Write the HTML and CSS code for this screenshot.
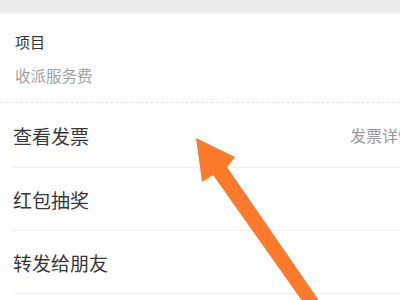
FILE: index.html
```html
<!DOCTYPE html>
<html lang="zh-CN">
<head>
<meta charset="utf-8">
<link rel="stylesheet" href="styles.css">
</head>
<body>
<div class="page">
  <div class="topbar"></div>
  <section class="info">
    <div class="info-label">项目</div>
    <div class="info-value">收派服务费</div>
  </section>
  <ul class="menu">
    <li class="row row-first"><span class="row-label">查看发票</span><span class="row-value">发票详情</span></li>
    <li class="row"><span class="row-label">红包抽奖</span></li>
    <li class="row"><span class="row-label">转发给朋友</span></li>
    <li class="row"><span class="row-label"></span></li>
  </ul>
</div>
<svg class="arrow" width="400" height="300" viewBox="0 0 400 300" aria-hidden="true">
  <polygon points="196,138 235,157 227,167 322,305 305,305 213,175 202,182" fill="#fb7a2b"/>
</svg>
</body>
</html>
```
FILE: styles.css
```css
html, body {
  margin: 0;
  padding: 0;
  overflow: hidden;
  background: #ffffff;
}
body {
  width: 400px;
  height: 300px;
  position: relative;
  font-family: "Noto Sans CJK SC", "Noto Sans", sans-serif;
}
.page {
  width: 430px;
}
.topbar {
  height: 13px;
  background: #ececec;
  box-shadow: 0 1px 2px rgba(0,0,0,0.04);
}
.info {
  padding: 18px 16px 0 15px;
  height: 71px;
  border-bottom: 1px dashed #e3e3e3;
}
.info-label {
  font-size: 15px;
  line-height: 22px;
  color: #333333;
}
.info-value {
  margin-top: 11px;
  font-size: 15.5px;
  line-height: 22px;
  color: #a0a0a0;
}
.menu {
  list-style: none;
  margin: 0;
  padding: 0 0 0 13px;
}
.row {
  display: flex;
  align-items: center;
  justify-content: space-between;
  height: 62px;
  padding-right: 16px;
  border-bottom: 1px solid #efefef;
}
.row-first {
  height: 64px;
}
.row-label {
  font-size: 19px;
  color: #383838;
}
.row-value {
  font-size: 16px;
  color: #9a9a9a;
}
.arrow {
  position: absolute;
  left: 0;
  top: 0;
}
```
